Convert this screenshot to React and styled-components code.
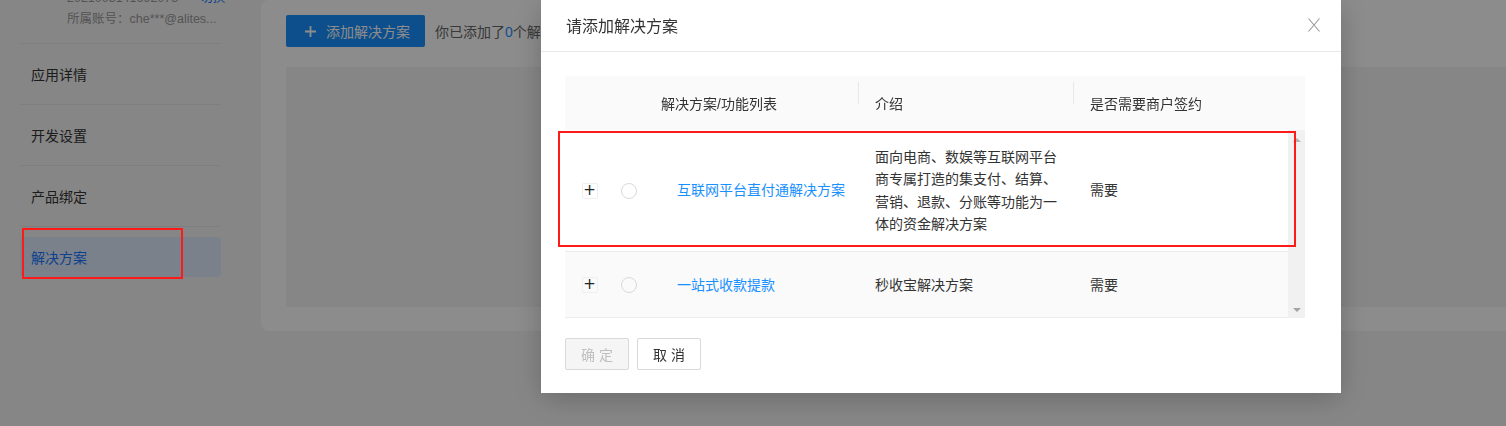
import React from "react";
import styled, { createGlobalStyle } from "styled-components";

const GlobalStyle = createGlobalStyle`
  * { box-sizing: border-box; }
  html, body {
    margin: 0;
    padding: 0;
    height: 100%;
    overflow: hidden;
    background: #f5f5f5;
    font-family: "Liberation Sans", "Noto Sans CJK SC", sans-serif;
    color: #333;
  }
`;

const menu = ["应用详情", "开发设置", "产品绑定"];

const rows = [
  {
    id: 1,
    name: "互联网平台直付通解决方案",
    intro: "面向电商、数娱等互联网平台商专属打造的集支付、结算、营销、退款、分账等功能为一体的资金解决方案",
    sign: "需要",
    marked: true,
  },
  {
    id: 2,
    name: "一站式收款提款",
    intro: "秒收宝解决方案",
    sign: "需要",
    hover: true,
  },
];

const App = () => {
  return (
    <>
      <GlobalStyle />
      <Page>
        <Sidebar>
          <Account>
            <AccountLine>
              2021003141692078<SwitchLink>切换</SwitchLink>
            </AccountLine>
            <AccountLine>所属账号：che***@alites...</AccountLine>
          </Account>
          {menu.map((m) => (
            <MenuItem key={m}>{m}</MenuItem>
          ))}
          <ActiveItem>
            解决方案
            <MarkBox $left={2} $top={-9} $w={161} $h={51} />
          </ActiveItem>
        </Sidebar>
        <Main>
          <Toolbar>
            <AddButton>
              <PlusIcon viewBox="0 0 12 12">
                <path d="M6 0v12M0 6h12" stroke="#fff" strokeWidth="2" />
              </PlusIcon>
              添加解决方案
            </AddButton>
            <Hint>
              你已添加了<Count>0</Count>个解决方案
            </Hint>
          </Toolbar>
          <ListArea />
        </Main>
      </Page>

      <Mask />

      <Modal>
        <ModalHeader>
          <ModalTitle>请添加解决方案</ModalTitle>
          <CloseIcon viewBox="0 0 12 14">
            <path d="M0.5 0.5L11.5 13.5M11.5 0.5L0.5 13.5" stroke="#999" strokeWidth="1.1" />
          </CloseIcon>
        </ModalHeader>
        <ModalBody>
          <TableBox>
            <HeadRow>
              <HeadCell />
              <HeadCell />
              <HeadCell>解决方案/功能列表</HeadCell>
              <HeadCell $divider>介绍</HeadCell>
              <HeadCell $divider>是否需要商户签约</HeadCell>
              <HeadCell />
            </HeadRow>
            <BodyWrap>
              <Rows>
                {rows.map((r) => (
                  <Row key={r.id} $hover={r.hover}>
                    <Cell $center>
                      <ExpandBox>+</ExpandBox>
                    </Cell>
                    <Cell $center>
                      <Radio />
                    </Cell>
                    <Cell $indent>
                      <NameLink>{r.name}</NameLink>
                    </Cell>
                    <Cell>{r.intro}</Cell>
                    <Cell>{r.sign}</Cell>
                  </Row>
                ))}
              </Rows>
              <ScrollTrack>
                <Arrow $up />
                <Arrow />
              </ScrollTrack>
              <MarkBox $left={-7} $top={1} $w={738} $h={116} />
            </BodyWrap>
          </TableBox>
        </ModalBody>
        <ModalFooter>
          <FootButton disabled>确 定</FootButton>
          <FootButton>取 消</FootButton>
        </ModalFooter>
      </Modal>
    </>
  );
};

const Page = styled.div`
  display: flex;
  height: 100vh;
`;

const Sidebar = styled.aside`
  width: 261px;
  flex-shrink: 0;
  padding: 0 40px 0 20px;
`;

const Account = styled.div`
  margin-top: -12px;
  padding: 0 0 13px 47px;
  border-bottom: 1px solid #e8e8e8;
`;

const AccountLine = styled.div`
  font-size: 12.5px;
  line-height: 21px;
  color: #999;
  white-space: nowrap;
`;

const SwitchLink = styled.span`
  margin-left: 22px;
  color: #1677ff;
`;

const MenuItem = styled.div`
  height: 61px;
  display: flex;
  align-items: center;
  padding-left: 11px;
  font-size: 14px;
  color: #333;
  border-bottom: 1px solid #e8e8e8;
`;

const ActiveItem = styled.div`
  position: relative;
  margin-top: 10px;
  height: 40px;
  display: flex;
  align-items: center;
  padding-left: 11px;
  font-size: 14px;
  color: #1677ff;
  background: #e1ebfd;
  border-radius: 4px;
`;

const MarkBox = styled.div`
  position: absolute;
  left: ${(p) => p.$left}px;
  top: ${(p) => p.$top}px;
  width: ${(p) => p.$w}px;
  height: ${(p) => p.$h}px;
  border: 2px solid #ff1a1a;
  z-index: 1002;
  pointer-events: none;
`;

const Main = styled.main`
  flex: 1;
  height: 331px;
  background: #fff;
  border-radius: 8px 0 0 8px;
  padding: 15px 0 24px 25px;
  display: flex;
  flex-direction: column;
  gap: 20px;
`;

const Toolbar = styled.div`
  display: flex;
  align-items: center;
  gap: 10px;
`;

const AddButton = styled.button`
  height: 32px;
  width: 139px;
  display: flex;
  align-items: center;
  gap: 10px;
  padding: 0 0 0 19px;
  border: none;
  border-radius: 2px;
  background: #1890ff;
  color: #fff;
  font-family: inherit;
  font-size: 14px;
`;

const PlusIcon = styled.svg`
  width: 11px;
  height: 11px;
`;

const Hint = styled.span`
  font-size: 14px;
  color: #666;
  white-space: nowrap;
`;

const Count = styled.span`
  color: #1890ff;
`;

const ListArea = styled.div`
  flex: 1;
  background: #f5f5f5;
`;

const Mask = styled.div`
  position: fixed;
  inset: 0;
  background: rgba(0, 0, 0, 0.45);
  z-index: 1000;
`;

const Modal = styled.div`
  position: fixed;
  left: 541px;
  top: 0;
  width: 800px;
  background: #fff;
  z-index: 1001;
  box-shadow: 0 6px 28px rgba(0, 0, 0, 0.22);
`;

const ModalHeader = styled.div`
  height: 52px;
  padding: 0 21px 2px 25px;
  display: flex;
  align-items: center;
  justify-content: space-between;
  border-bottom: 1px solid #e8e8e8;
`;

const ModalTitle = styled.div`
  font-size: 16px;
  color: #333;
`;

const CloseIcon = styled.svg`
  width: 12px;
  height: 14px;
`;

const ModalBody = styled.div`
  padding: 24px 36px 0 24px;
`;

const TableBox = styled.div`
  width: 740px;
  font-size: 14px;
  color: #333;
`;

const cols = "48px 32px 213px 215px 215px";

const HeadRow = styled.div`
  display: grid;
  grid-template-columns: ${cols} 17px;
  height: 54px;
  background: #fafafa;
  align-items: center;
`;

const HeadCell = styled.div`
  position: relative;
  padding-left: ${(p) => (p.$divider ? 17 : 16)}px;
  white-space: nowrap;
  &::before {
    content: "";
    display: ${(p) => (p.$divider ? "block" : "none")};
    position: absolute;
    left: 0;
    top: -11px;
    width: 1px;
    height: 22px;
    background: #e8e8e8;
  }
`;

const BodyWrap = styled.div`
  position: relative;
  display: flex;
`;

const Rows = styled.div`
  width: 723px;
`;

const Row = styled.div`
  display: grid;
  grid-template-columns: ${cols};
  min-height: 66px;
  align-items: center;
  border-bottom: 1px solid #ededed;
  background: ${(p) => (p.$hover ? "#fafafa" : "#fff")};
`;

const Cell = styled.div`
  padding: 16px ${(p) => (p.$center ? 0 : 16)}px 16px ${(p) => (p.$indent ? 32 : p.$center ? 0 : 17)}px;
  line-height: 22.3px;
  display: ${(p) => (p.$center ? "flex" : "block")};
  justify-content: center;
`;

const ExpandBox = styled.span`
  width: 16px;
  height: 16px;
  border: 1px solid #efefef;
  border-radius: 2px;
  display: flex;
  align-items: center;
  justify-content: center;
  font-size: 15px;
  line-height: 1;
  color: #222;
  font-family: "DejaVu Sans", sans-serif;
  margin-left: 1px;
`;

const Radio = styled.span`
  width: 16px;
  height: 16px;
  border: 1px solid #d9d9d9;
  border-radius: 50%;
`;

const NameLink = styled.span`
  color: #1890ff;
  white-space: nowrap;
`;

const ScrollTrack = styled.div`
  width: 17px;
  background: #f1f1f1;
  display: flex;
  flex-direction: column;
  justify-content: space-between;
  align-items: center;
  padding: 8px 0 6px;
`;

const Arrow = styled.span`
  width: 0;
  height: 0;
  border-left: 4px solid transparent;
  border-right: 4px solid transparent;
  ${(p) =>
    p.$up ? "border-bottom: 4px solid #b5b5b5;" : "border-top: 4px solid #a3a3a3;"}
`;

const ModalFooter = styled.div`
  display: flex;
  gap: 8px;
  padding: 20px 24px 23px;
`;

const FootButton = styled.button`
  width: 64px;
  height: 32px;
  border: 1px solid #d9d9d9;
  border-radius: 2px;
  background: ${(p) => (p.disabled ? "#f5f5f5" : "#fff")};
  color: ${(p) => (p.disabled ? "#bfbfbf" : "#333")};
  font-family: inherit;
  font-size: 14px;
  padding: 0;
`;

export default App;
